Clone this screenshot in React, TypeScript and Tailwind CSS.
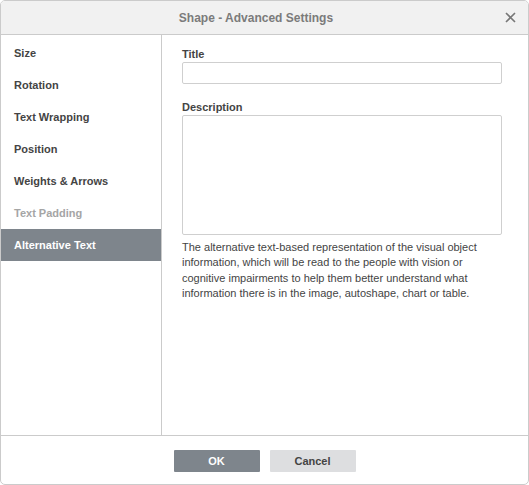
import React, { useState } from 'react';

const tabs = [
  { name: 'Size', id: 'size' },
  { name: 'Rotation', id: 'rotation' },
  { name: 'Text Wrapping', id: 'wrap' },
  { name: 'Position', id: 'position' },
  { name: 'Weights & Arrows', id: 'weights' },
  { name: 'Text Padding', id: 'padding', disabled: true },
  { name: 'Alternative Text', id: 'alt' },
];

const App: React.FC = () => {
  const [current, setCurrent] = useState('alt');

  return (
    <div className="w-[529px] h-[485px] bg-white font-['Liberation_Sans',Arial,sans-serif]">
      <div className="w-full h-full flex flex-col border border-[#cbcbcb] rounded-[5px] overflow-hidden">
        <div className="relative h-[34px] shrink-0 flex items-center justify-center pr-[17px] bg-[#f1f1f1] border-b border-[#cbcbcb]">
          <span className="text-[12px] font-bold text-[#7b7b7b]">Shape - Advanced Settings</span>
          <button className="absolute right-[12px] top-[10px] w-[12px] h-[12px] flex items-center justify-center">
            <svg width="11" height="11" viewBox="0 0 11 11">
              <path d="M1 1 L10 10 M10 1 L1 10" stroke="#777" strokeWidth="1.6" />
            </svg>
          </button>
        </div>

        <div className="flex-1 flex min-h-0">
          <div className="w-[161px] shrink-0 border-r border-[#cbcbcb] pt-[2px]">
            {tabs.map(tab => (
              <button
                key={tab.id}
                onClick={() => !tab.disabled && setCurrent(tab.id)}
                className={`block w-full h-[32px] text-left pl-[13px] text-[11px] font-bold ${
                  current === tab.id
                    ? 'bg-[#7e858c] text-white'
                    : tab.disabled
                    ? 'text-[#a5a5a5]'
                    : 'text-[#444]'
                }`}
              >
                {tab.name}
              </button>
            ))}
          </div>

          <div className="flex-1 pl-[20px] pr-[26px] pt-[12px]">
            <div className="text-[11px] font-bold text-[#444] leading-[15px]">Title</div>
            <input className="block w-full h-[22px] border border-[#cfcfcf] rounded-[2px] outline-none px-1 text-[11px]" />
            <div className="mt-[16px] text-[11px] font-bold text-[#444] leading-[15px]">Description</div>
            <textarea className="block w-full h-[120px] border border-[#cfcfcf] rounded-[2px] outline-none resize-none p-1 text-[11px]" />
            <p className="mt-[5px] text-[11px] leading-[15.4px] text-[#444]">
              The alternative text-based representation of the visual object information, which will be read to the people with vision or cognitive impairments to help them better understand what information there is in the image, autoshape, chart or table.
            </p>
          </div>
        </div>

        <div className="h-[49px] shrink-0 border-t border-[#cbcbcb] flex justify-center items-start pt-[14px] gap-[10px]">
          <button className="w-[86px] h-[22px] bg-[#7e858c] text-white text-[11px] font-bold rounded-[1px]">OK</button>
          <button className="w-[86px] h-[22px] bg-[#dddee0] text-[#444] text-[11px] font-bold rounded-[1px]">Cancel</button>
        </div>
      </div>
    </div>
  );
};

export default App;
